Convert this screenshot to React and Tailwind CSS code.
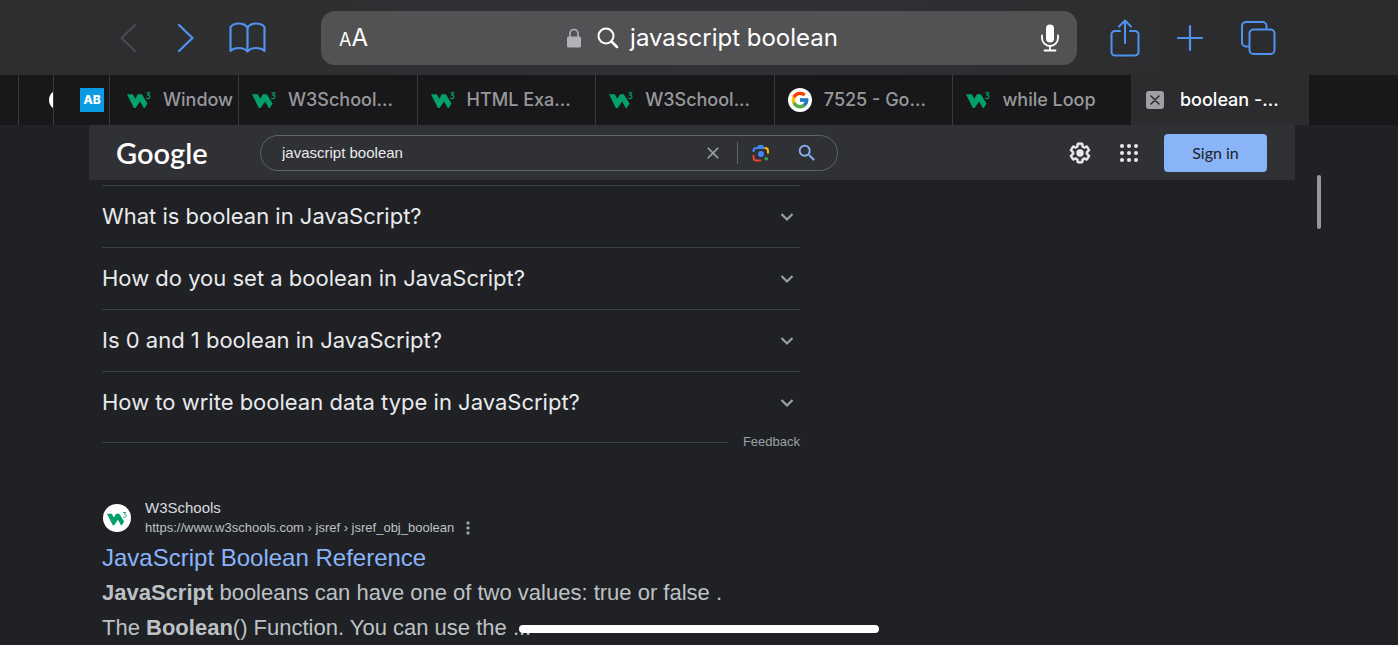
import React from "react";
import { FcGoogle } from "react-icons/fc";
import { MdSearch, MdClose, MdMoreVert } from "react-icons/md";

const questions = [
  "What is boolean in JavaScript?",
  "How do you set a boolean in JavaScript?",
  "Is 0 and 1 boolean in JavaScript?",
  "How to write boolean data type in JavaScript?",
];

function W3Logo({ className }) {
  return (
    <svg viewBox="0 0 24 18" className={className} aria-hidden="true">
      <path
        d="M0 3.200h5.800l2.500 4.600 2.600-4.600h3.900l5.700 9.400-2.700 4.400h-1l-3.700-6.400-4.500 6.400H6.800z"
        fill="#04a06a"
      />
      <path
        d="M19.400 1.800h3.200l-1.800 2.100c1.300 0 2.100.7 2.100 1.800 0 1.200-.9 1.900-2 1.900-.8 0-1.400-.3-1.800-.9"
        fill="none"
        stroke="#04a06a"
        strokeWidth="1.100"
      />
    </svg>
  );
}

function LensIcon() {
  return (
    <svg viewBox="0 0 18 18" className="size-[18px]" fill="none" strokeWidth="2" aria-hidden="true">
      <path d="M1.500 8V7a3 3 0 0 1 3-3H12" stroke="#4285f4" />
      <path d="M5 3.500 6.500 1h4.300l1.500 2.500V5H5z" fill="#4285f4" />
      <path d="M12.500 4h.5a3 3 0 0 1 3 3v2.500" stroke="#fbbc04" />
      <path d="M1.500 11v2.500a3 3 0 0 0 3 3H9" stroke="#ea4335" />
      <circle cx="9" cy="10" r="3" fill="#4285f4" />
      <circle cx="14.300" cy="14.800" r="1.800" fill="#34a853" />
    </svg>
  );
}

function GearIcon() {
  return (
    <svg viewBox="0 0 24 24" className="size-6" fill="currentColor" aria-hidden="true">
      <path d="M13.85 22.25h-3.7c-.74 0-1.36-.54-1.45-1.27l-.27-1.89c-.27-.14-.53-.29-.79-.46l-1.8.72c-.7.26-1.47-.03-1.81-.65L2.2 15.53c-.35-.66-.2-1.44.36-1.88l1.53-1.19c-.01-.15-.02-.3-.02-.46 0-.15.01-.31.02-.46l-1.52-1.19c-.59-.45-.74-1.26-.37-1.88l1.85-3.19c.34-.62 1.11-.9 1.79-.63l1.81.73c.26-.17.52-.32.78-.46l.27-1.91c.09-.7.71-1.25 1.44-1.25h3.7c.74 0 1.36.54 1.45 1.27l.27 1.89c.27.14.53.29.79.46l1.8-.72c.71-.26 1.48.03 1.82.65l1.84 3.18c.36.66.2 1.44-.36 1.88l-1.52 1.19c.01.15.02.3.02.46s-.01.31-.02.46l1.52 1.19c.56.45.72 1.23.37 1.86l-1.86 3.22c-.34.62-1.11.9-1.8.63l-1.8-.72c-.26.17-.52.32-.78.46l-.27 1.91c-.1.68-.72 1.22-1.46 1.22zm-3.23-2h2.76l.37-2.55.53-.22c.44-.18.88-.44 1.34-.78l.45-.34 2.38.96 1.38-2.4-2.03-1.58.07-.56c.03-.26.06-.51.06-.78s-.03-.53-.06-.78l-.07-.56 2.03-1.58-1.39-2.4-2.39.96-.45-.35c-.42-.32-.87-.58-1.33-.77l-.52-.22-.37-2.55h-2.76l-.37 2.55-.53.21c-.44.19-.88.44-1.34.79l-.45.33-2.38-.95-1.39 2.39 2.03 1.58-.07.56a7 7 0 0 0-.06.79c0 .26.02.53.06.78l.07.56-2.03 1.58 1.38 2.4 2.39-.96.45.35c.43.33.86.58 1.33.77l.53.22.38 2.55z" stroke="currentColor" strokeWidth="0.500" />
      <circle cx="12" cy="12" r="3.700" />
    </svg>
  );
}

function Toolbar() {
  return (
    <div className="flex h-[75px] items-center bg-linear-to-r from-[#2d2d2f] via-[#303134] to-[#2b2b2d] pr-[122px] pl-30 font-[Inter,sans-serif] text-[#4f93ee]">
      <div className="flex w-[201px] items-center">
        <button aria-label="Back" className="w-[57px] text-[#4c4d50]">
          <svg viewBox="0 0 17 30" className="h-[30px] w-[17px]" fill="none" stroke="currentColor" strokeWidth="2" strokeLinecap="round" strokeLinejoin="round">
            <path d="M15 2 1.500 15 15 28" />
          </svg>
        </button>
        <button aria-label="Forward" className="w-[52px]">
          <svg viewBox="0 0 17 30" className="h-[30px] w-[17px]" fill="none" stroke="currentColor" strokeWidth="2.300" strokeLinecap="round" strokeLinejoin="round">
            <path d="M2 2 15.500 15 2 28" />
          </svg>
        </button>
        <button aria-label="Bookmarks">
          <svg viewBox="0 0 37 31" className="h-[31px] w-[37px]" fill="none" stroke="currentColor" strokeWidth="2.200" strokeLinejoin="round">
            <path d="M18.500 5.500C16.500 2.800 13.500 1.500 10 1.500S3.200 2.700 1.500 5.200V29c2-2 5-3 8.500-3s6.500 1.200 8.500 3.500c2-2.300 5-3.500 8.500-3.500s6.500 1 8.500 3V5.200C33.800 2.700 30.500 1.500 27 1.500s-6.500 1.300-8.500 4zv24" />
          </svg>
        </button>
      </div>
      <div className="flex h-[54px] flex-1 items-center rounded-[14px] bg-[#525254] pr-[18px] pl-[18px] text-white">
        <button aria-label="Page settings" className="flex items-baseline pt-0.5">
          <span className="text-lg leading-8">A</span>
          <span className="text-2xl leading-8">A</span>
        </button>
        <div className="flex flex-1 items-center justify-center pr-1">
          <svg viewBox="0 0 14 20" className="mr-4 h-5 w-[14px] text-[#b1b1b8]" aria-hidden="true">
            <rect x="0" y="8.500" width="14" height="11" rx="1.500" fill="currentColor" />
            <path d="M3 9V5.500a4 4 0 0 1 8 0V9" fill="none" stroke="currentColor" strokeWidth="1.600" />
          </svg>
          <svg viewBox="0 0 22 22" className="mr-[11px] size-[22px]" fill="none" stroke="currentColor" strokeWidth="2" strokeLinecap="round" aria-hidden="true">
            <circle cx="9" cy="9" r="7.500" />
            <path d="m14.500 14.500 5.500 5.500" strokeWidth="2.500" />
          </svg>
          <span className="text-2xl leading-8">javascript boolean</span>
        </div>
        <button aria-label="Dictate">
          <svg viewBox="0 0 18 28" className="h-7 w-[18px]" fill="none" stroke="currentColor" strokeWidth="1.800" strokeLinecap="round">
            <rect x="5" y="0.500" width="8" height="18" rx="4" fill="currentColor" stroke="none" />
            <path d="M1 11.500V14a8 8 0 0 0 16 0v-2.500M9 22v4.500M3.500 26.500h11" />
          </svg>
        </button>
      </div>
      <div className="flex items-center pl-[33px]">
        <button aria-label="Share" className="mr-9">
          <svg viewBox="0 0 30 38" className="h-[38px] w-[30px]" fill="none" stroke="currentColor" strokeWidth="2" strokeLinecap="round" strokeLinejoin="round">
            <path d="M10 12H5a3.500 3.500 0 0 0-3.500 3.500V33A3.500 3.500 0 0 0 5 36.500h20a3.500 3.500 0 0 0 3.500-3.500V15.500A3.500 3.500 0 0 0 25 12h-5M15 24V1.500M9 7.500l6-6 6 6" />
          </svg>
        </button>
        <button aria-label="New tab" className="mr-9">
          <svg viewBox="0 0 28 28" className="size-7" stroke="currentColor" strokeWidth="2.200" strokeLinecap="round">
            <path d="M14 2v24M2 14h24" />
          </svg>
        </button>
        <button aria-label="Show tabs">
          <svg viewBox="0 0 36 36" className="size-9" fill="none" stroke="currentColor" strokeWidth="2" strokeLinejoin="round">
            <path d="M9.500 26.500H6A4 4 0 0 1 2 22.500V6a4 4 0 0 1 4-4h16.500a4 4 0 0 1 4 4v3.500" />
            <rect x="9.500" y="9.500" width="25" height="24.500" rx="4" />
          </svg>
        </button>
      </div>
    </div>
  );
}

function Tab({ icon, title }) {
  return (
    <button className="flex min-w-0 flex-1 items-center gap-3 overflow-hidden border-l border-[#3a3a3c] pl-[13px] whitespace-nowrap">
      {icon}
      {title}
    </button>
  );
}

function TabStrip() {
  const w3 = <W3Logo className="h-[18px] w-6 shrink-0" />;
  return (
    <nav aria-label="Open tabs" className="flex h-[50px] bg-[#18181a] font-[Inter,sans-serif] text-lg font-medium text-[#98989c]">
      <div className="w-[18px]" />
      <button aria-label="Background tab" className="flex w-[35px] items-center justify-end overflow-hidden border-l border-[#3a3a3c]">
        <svg viewBox="0 0 4 16" className="h-4 w-1" aria-hidden="true">
          <path d="M4 0C1.300 2 0 4.500 0 8s1.300 6 4 8z" fill="#fff" />
        </svg>
      </button>
      <button className="flex w-14 items-center border-l border-[#3a3a3c] pl-[26px]">
        <span className="flex size-6 items-center justify-center bg-[#0a9be3] text-xs font-extrabold text-white">AB</span>
      </button>
      <button className="flex w-[129px] items-center gap-3 overflow-hidden border-l border-[#3a3a3c] pl-[17px]">
        {w3}
        Window
      </button>
      <Tab icon={w3} title="W3School..." />
      <Tab icon={w3} title="HTML Exa..." />
      <Tab icon={w3} title="W3School..." />
      <Tab
        icon={
          <span className="flex size-6 shrink-0 items-center justify-center rounded-full bg-white">
            <FcGoogle className="size-5" />
          </span>
        }
        title="7525 - Go..."
      />
      <Tab icon={w3} title="while Loop" />
      <div className="flex w-[178px] items-center gap-4 overflow-hidden bg-[#2c2c2e] pl-[15px] whitespace-nowrap text-white">
        <button aria-label="Close tab" className="flex size-[18px] shrink-0 items-center justify-center rounded-[3px] bg-[#a0a0a4]">
          <svg viewBox="0 0 10 10" className="size-[10px]" stroke="#2c2c2e" strokeWidth="1.600" strokeLinecap="round">
            <path d="m1 1 8 8M9 1 1 9" />
          </svg>
        </button>
        boolean -...
      </div>
      <div className="w-[89px]" />
    </nav>
  );
}

function GoogleHeader() {
  return (
    <header className="mr-[103px] ml-[89px] flex h-[55px] items-center bg-[#303134] pr-7 pl-[27px]">
      <a href="#home" className="w-36 font-[Lato,sans-serif] text-[29px] font-semibold text-white">Google</a>
      <form className="flex h-9 w-[578px] items-center rounded-full border border-[#5f6368] pr-[19px] pl-[21px]">
        <input
          aria-label="Search"
          defaultValue="javascript boolean"
          className="min-w-0 flex-1 bg-transparent pt-0.5 font-['Liberation_Sans',Arial,sans-serif] text-[15px] text-[#e8eaed] outline-none"
        />
        <button type="button" aria-label="Clear" className="mr-[14px] text-[#9aa0a6]">
          <MdClose className="size-5" />
        </button>
        <div className="mr-[14px] h-[22px] w-px bg-[#5f6368]" />
        <button type="button" aria-label="Search by image" className="mr-[26px]">
          <LensIcon />
        </button>
        <button type="submit" aria-label="Google Search" className="text-[#8ab4f8]">
          <MdSearch className="size-[22px]" />
        </button>
      </form>
      <div className="ml-auto flex items-center text-[#e8eaed]">
        <button aria-label="Quick settings" className="mr-[25px]"><GearIcon /></button>
        <button aria-label="Google apps" className="mr-[23px]">
          <svg viewBox="0 0 18 18" className="mx-[3px] size-[18px]" fill="currentColor">
            {[2, 9, 16].map((y) => [2, 9, 16].map((x) => <circle key={x + "-" + y} cx={x} cy={y} r="2" />))}
          </svg>
        </button>
        <button className="h-[38px] w-[103px] rounded bg-[#8ab4f8] font-[Lato,sans-serif] text-base text-[#202124]">Sign in</button>
      </div>
    </header>
  );
}

function Results() {
  return (
    <div className="ml-[102px] max-w-[698px] pt-[5px] font-['Liberation_Sans',Arial,sans-serif]">
      {questions.map((q) => (
        <button
          key={q}
          className="flex h-[62px] w-full items-center justify-between border-t border-[#3c4043] pr-[6px] text-left font-[Inter,sans-serif] text-[22px] text-[#e8eaed]"
        >
          {q}
          <svg viewBox="0 0 14 10" className="h-[10px] w-[14px] text-[#9aa0a6]" fill="none" stroke="currentColor" strokeWidth="2.200" aria-hidden="true">
            <path d="m1.500 2 5.500 5.500L12.500 2" />
          </svg>
        </button>
      ))}
      <div className="flex h-[18px] items-center gap-[15px]">
        <div className="h-px flex-1 bg-[#3c4043]" />
        <a href="#feedback" className="text-[13px] text-[#9aa0a6]">Feedback</a>
      </div>
      <article className="mt-[47px]">
        <div className="flex items-center gap-[14px]">
          <span className="ml-px flex size-7 items-center justify-center rounded-full bg-white">
            <W3Logo className="h-[15px] w-5" />
          </span>
          <div className="text-[13px] leading-5 text-[#bdc1c6]">
            <div className="text-[15px] text-[#dadce0]">W3Schools</div>
            <div className="flex items-center gap-1">
              <cite className="not-italic">https://www.w3schools.com › jsref › jsref_obj_boolean</cite>
              <button aria-label="About this result" className="text-[#9aa0a6]">
                <MdMoreVert className="size-5" />
              </button>
            </div>
          </div>
        </div>
        <h3 className="mt-0.5 text-2xl leading-[35px] text-[#8ab4f8]">
          <a href="#result">JavaScript Boolean Reference</a>
        </h3>
        <p className="text-[22px] leading-[35px] text-[#bdc1c6]">
          <b>JavaScript</b> booleans can have one of two values: true or false .<br />
          The <b>Boolean</b>() Function. You can use the ...
        </p>
      </article>
    </div>
  );
}

export default function App() {
  return (
    <div className="relative h-screen overflow-hidden bg-[#202124]">
      <Toolbar />
      <TabStrip />
      <GoogleHeader />
      <main>
        <Results />
      </main>
      <div className="absolute top-[175px] right-[77px] h-[54px] w-1 rounded-full bg-[#97989a]" />
      <div className="absolute bottom-3 left-1/2 h-2 w-[360px] -translate-x-1/2 rounded-full bg-white" />
    </div>
  );
}
